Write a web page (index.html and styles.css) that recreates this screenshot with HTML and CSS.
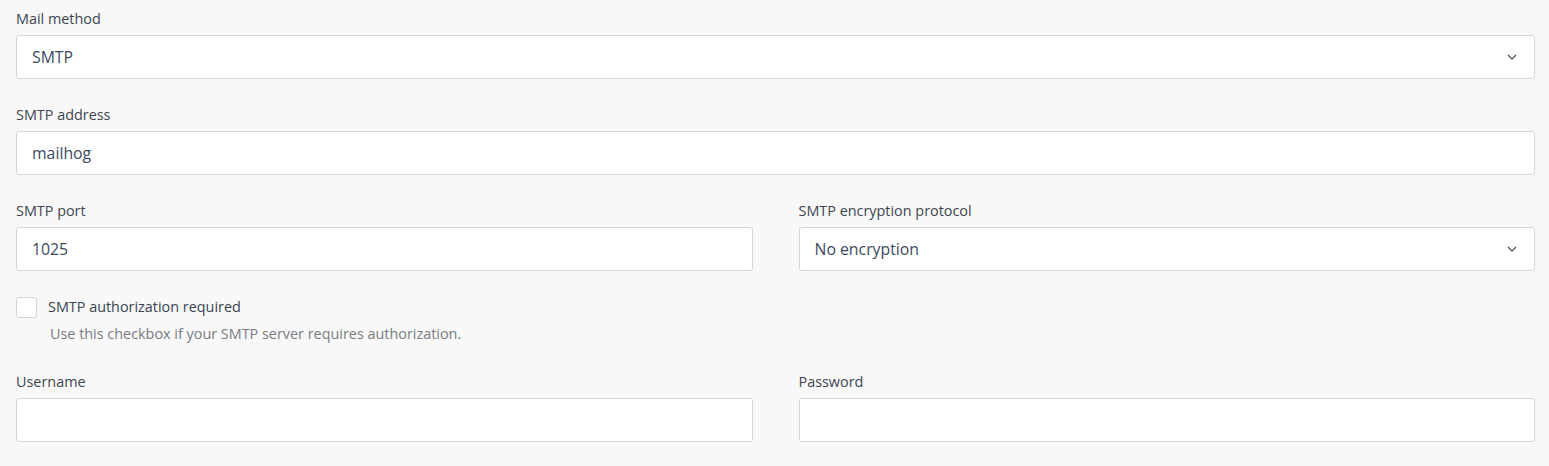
FILE: index.html
```html
<!DOCTYPE html>
<html>
<head>
<meta charset="utf-8">
<link rel="stylesheet" href="styles.css">
</head>
<body>
<div class="form">
  <div class="field">
    <label class="label">Mail method</label>
    <div class="control select">
      <span class="value">SMTP</span>
      <svg class="chev" width="10" height="6" viewBox="0 0 10 6"><path d="M1 1l4 4 4-4" fill="none" stroke="#555" stroke-width="1.3"/></svg>
    </div>
  </div>
  <div class="field">
    <label class="label">SMTP address</label>
    <div class="control"><span class="value">mailhog</span></div>
  </div>
  <div class="row">
    <div class="field">
      <label class="label">SMTP port</label>
      <div class="control"><span class="value">1025</span></div>
    </div>
    <div class="field">
      <label class="label">SMTP encryption protocol</label>
      <div class="control select">
        <span class="value">No encryption</span>
        <svg class="chev" width="10" height="6" viewBox="0 0 10 6"><path d="M1 1l4 4 4-4" fill="none" stroke="#555" stroke-width="1.3"/></svg>
      </div>
    </div>
  </div>
  <div class="check">
    <span class="box"></span>
    <div class="check-text">
      <div class="check-label">SMTP authorization required</div>
      <div class="help">Use this checkbox if your SMTP server requires authorization.</div>
    </div>
  </div>
  <div class="row">
    <div class="field">
      <label class="label">Username</label>
      <div class="control"></div>
    </div>
    <div class="field">
      <label class="label">Password</label>
      <div class="control"></div>
    </div>
  </div>
</div>
</body>
</html>
```

FILE: styles.css
```css
html, body {
  margin: 0;
  background: #f8f8f8;
}
body {
  font-family: "Open Sans", "Noto Sans", sans-serif;
  color: #3a4450;
}
.form {
  padding: 8px 14px 0 16px;
  display: flex;
  flex-direction: column;
}
.field {
  display: flex;
  flex-direction: column;
  margin-bottom: 25px;
}
.label {
  font-size: 14.4px;
  line-height: 20px;
  color: #3d4650;
  padding-top: 1px;
  margin-bottom: 6px;
}
.control {
  height: 42px;
  background: #fff;
  border: 1px solid #d6d6d6;
  border-radius: 3px;
  display: flex;
  align-items: center;
  padding: 0 15px;
}
.value {
  font-size: 15.8px;
  color: #3c4a5e;
  flex: 1;
}
.chev {
  margin-right: 2px;
}
.row {
  display: grid;
  grid-template-columns: 1fr 1fr;
  column-gap: 46px;
}
.check {
  display: flex;
  align-items: flex-start;
  margin-top: 1px;
  margin-bottom: 27px;
}
.box {
  width: 19px;
  height: 19px;
  border: 1px solid #d4d4d4;
  border-radius: 3px;
  background: #fff;
  flex: none;
  margin-right: 11px;
}
.check-label {
  font-size: 14.4px;
  line-height: 20px;
  color: #3a4450;
}
.help {
  font-size: 14.4px;
  line-height: 20px;
  color: #777d83;
  margin-top: 7px;
  margin-left: 2px;
}
```
